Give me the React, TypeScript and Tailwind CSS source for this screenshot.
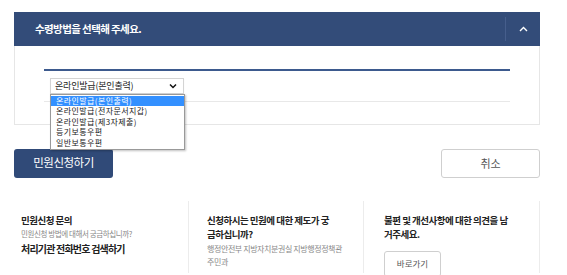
const font = { fontFamily: '"Noto Sans CJK KR", "Noto Sans", sans-serif' }

const options = [
  '온라인발급(본인출력)',
  '온라인발급(전자문서지갑)',
  '온라인발급(제3자제출)',
  '등기보통우편',
  '일반보통우편',
]

export default function App() {
  return (
    <div className="relative w-[567px] h-[275px] overflow-hidden bg-white" style={font}>
      <div className="ml-[14px] w-[526px] pt-[12px]">
        {/* accordion header */}
        <div className="flex h-[34px] items-center justify-between bg-[#334c79]">
          <span className="pl-[21px] text-[10.5px] font-bold tracking-[-0.6px] text-white">
            수령방법을 선택해 주세요.
          </span>
          <div className="flex h-[24px] w-[35px] items-center justify-center border-l border-[#465e8c]">
            <svg width="9" height="6" viewBox="0 0 9 6">
              <polyline points="1,5 4.5,1.5 8,5" fill="none" stroke="white" strokeWidth="1.4" />
            </svg>
          </div>
        </div>

        {/* accordion body */}
        <div className="border border-t-0 border-[#e6e6e6] px-[29px] pt-[23px] pb-[22px]">
          <div className="h-[1.5px] bg-[#3d5a8e]" />
          <div className="ml-[6px] mt-[7px] flex h-[16px] w-[134px] items-center justify-between border border-[#d4d4d4] bg-white pl-[4px] pr-[6px] shadow-[0_1px_1px_rgba(0,0,0,0.06)]">
            <span className="text-[9px] text-[#222] tracking-[-0.2px]">온라인발급(본인출력)</span>
            <svg width="8" height="6" viewBox="0 0 8 6">
              <polyline points="1,1.5 4,4.5 7,1.5" fill="none" stroke="#111" strokeWidth="1.5" />
            </svg>
          </div>
          <div className="mt-[7px] h-px bg-[#e8e8e8]" />
        </div>

        {/* buttons */}
        <div className="mt-[24px] flex justify-between">
          <button className="h-[29px] w-[99px] rounded-[3px] bg-[#304a78] text-[11.5px] tracking-[-0.5px] text-white">
            민원신청하기
          </button>
          <button className="h-[29px] w-[99px] rounded-[3px] border border-[#cfcfcf] bg-white text-[11px] text-[#555]">
            취소
          </button>
        </div>

        {/* info columns */}
        <div className="mt-[23px] grid grid-cols-[175px_175px_176px]">
          <div className="h-[72px] border-r border-[#ececec] pl-[7px] pt-[12px]">
            <p className="text-[9.5px] font-bold leading-[14px] tracking-[-0.5px] text-[#222]">민원신청 문의</p>
            <p className="mt-px text-[7.5px] leading-[12px] tracking-[-0.4px] text-[#888]">민원신청 방법에 대해서 궁금하십니까?</p>
            <p className="mt-[2px] text-[10px] font-bold leading-[14px] tracking-[-0.8px] text-[#222]">처리기관 전화번호 검색하기</p>
          </div>
          <div className="h-[72px] border-r border-[#ececec] pl-[18px] pt-[12px]">
            <p className="text-[9.5px] font-bold leading-[14px] tracking-[-0.5px] text-[#222]">
              신청하시는 민원에 대한 제도가 궁<br />금하십니까?
            </p>
            <p className="mt-[1px] text-[8px] leading-[13px] tracking-[-0.4px] text-[#888]">
              행정안전부 지방자치분권실 지방행정정책관<br />주민과
            </p>
          </div>
          <div className="h-[72px] border-r border-[#ececec] pl-[20px] pt-[12px]">
            <p className="text-[9.5px] font-bold leading-[14px] tracking-[-0.5px] text-[#222]">
              불편 및 개선사항에 대한 의견을 남<br />거주세요.
            </p>
            <button className="mt-[10px] h-[26px] w-[57px] rounded-[3px] border border-[#cfcfcf] bg-white text-[8.5px] text-[#555]">
              바로가기
            </button>
          </div>
        </div>
      </div>

      {/* open select list */}
      <ul className="absolute left-[50px] top-[94px] w-[135px] border border-[#999] bg-white py-px shadow-[1px_1px_2px_rgba(0,0,0,0.25)]">
        {options.map((o, i) => (
          <li
            key={o}
            className={`h-[10.4px] overflow-hidden pl-[5px] text-[8px] leading-[10.4px] tracking-[0.4px] ${i === 0 ? 'bg-[#3390ff] text-white' : 'text-[#222]'}`}
          >
            {o}
          </li>
        ))}
      </ul>
    </div>
  )
}
